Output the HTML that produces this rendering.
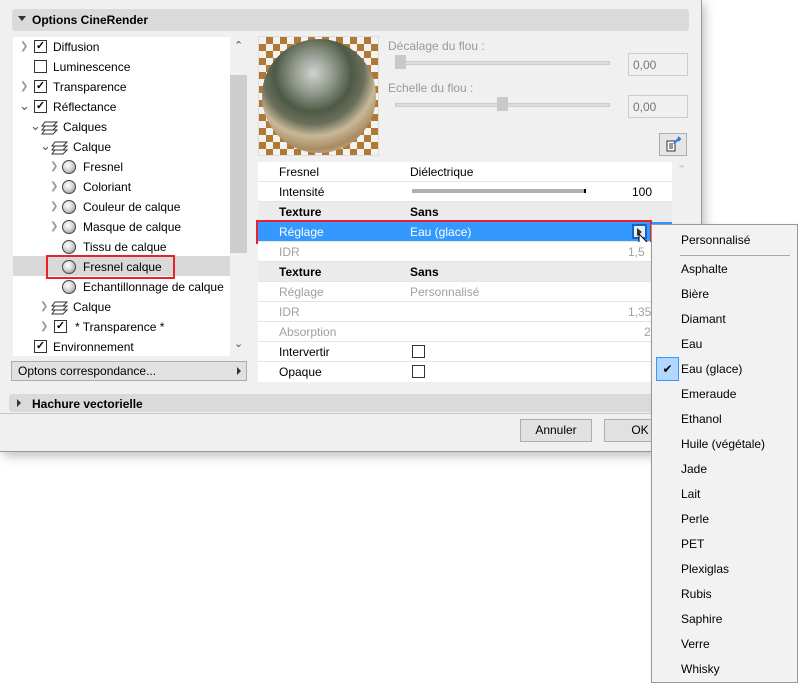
<!DOCTYPE html>
<html><head><meta charset="utf-8"><style>
*{box-sizing:border-box;margin:0;padding:0}
body{width:798px;height:683px;background:#fff;position:relative;overflow:hidden;font-family:"Liberation Sans",sans-serif;font-size:12px;color:#000}
.a{position:absolute}
#dlg{left:0;top:0;width:702px;height:452px;background:#f0f0f0;border-right:1px solid #8a9bb0;border-bottom:1px solid #8a9bb0;box-shadow:3px 4px 10px rgba(0,0,0,.25)}
.bar{background:#dadada;border-radius:3px}
.row{position:absolute;left:0;height:20px;line-height:20px;white-space:nowrap}
.cb{position:absolute;width:13px;height:13px;border:1px solid #333;background:#fff;font-size:11px;line-height:11px;text-align:center;font-weight:bold}
.chev{position:absolute;color:#999;font-size:10px}
.ball{position:absolute;width:14px;height:14px;border-radius:50%;border:1px solid #444;background:radial-gradient(circle at 40% 35%,#fff 0,#ddd 40%,#888 100%)}
.pr{position:absolute;left:258px;width:414px;height:20px;line-height:20px;border-bottom:1px solid #e4e4e4;background:#fff}
.pr .l{position:absolute;left:21px}.pr .v{position:absolute;left:152px}
.g{color:#a0a0a0}.b{font-weight:bold}
.mi{position:absolute;left:29px;height:25px;line-height:25px}
</style></head><body>
<div id="dlg" class="a">
 <div class="a bar" style="left:12px;top:9px;width:677px;height:22px"></div>
 <div class="a" style="left:18px;top:16px;border-left:4px solid transparent;border-right:4px solid transparent;border-top:5px solid #333"></div>
 <div class="a b" style="left:32px;top:13px">Options CineRender</div>

 <div class="a" style="left:13px;top:37px;width:234px;height:319px;background:#fff">
  <div class="a" style="left:217px;top:0;width:17px;height:319px;background:#f0f0f0"></div>
  <div class="a" style="left:217px;top:38px;width:17px;height:178px;background:#cdcdcd"></div>
  <div class="a" style="left:221px;top:2px;color:#555;font-size:11px">&#8963;</div>
  <div class="a" style="left:221px;top:300px;color:#555;font-size:11px">&#8964;</div>
  <div class="a" style="left:0;top:219px;width:217px;height:20px;background:#d9d9d9"></div>
 </div>
 <div class="a" style="left:13px;top:37px;width:217px;height:319px">
  <span class="chev" style="left:7px;top:4px">&#10095;</span><div class="cb" style="left:21px;top:3px">✓</div><div class="row" style="left:40px;top:0">Diffusion</div>
  <div class="cb" style="left:21px;top:23px"></div><div class="row" style="left:40px;top:20px">Luminescence</div>
  <span class="chev" style="left:7px;top:44px">&#10095;</span><div class="cb" style="left:21px;top:43px">✓</div><div class="row" style="left:40px;top:40px">Transparence</div>
  <span class="chev" style="left:6px;top:61px;color:#555;font-size:13px">&#8964;</span><div class="cb" style="left:21px;top:63px">✓</div><div class="row" style="left:40px;top:60px">Réflectance</div>
  <span class="chev" style="left:17px;top:81px;color:#555;font-size:13px">&#8964;</span><svg class="a" style="left:28px;top:83px" width="18" height="15"><path d="M4 2h12l-4 4H1zM4 6h12l-4 4H1zM4 10h12l-4 4H1z" fill="#fff" stroke="#333"/></svg><div class="row" style="left:50px;top:80px">Calques</div>
  <span class="chev" style="left:27px;top:101px;color:#555;font-size:13px">&#8964;</span><svg class="a" style="left:38px;top:103px" width="18" height="15"><path d="M4 2h12l-4 4H1zM4 6h12l-4 4H1zM4 10h12l-4 4H1z" fill="#fff" stroke="#333"/></svg><div class="row" style="left:60px;top:100px">Calque</div>
  <span class="chev" style="left:37px;top:124px">&#10095;</span><div class="ball" style="left:49px;top:123px"></div><div class="row" style="left:70px;top:120px">Fresnel</div>
  <span class="chev" style="left:37px;top:144px">&#10095;</span><div class="ball" style="left:49px;top:143px"></div><div class="row" style="left:70px;top:140px">Coloriant</div>
  <span class="chev" style="left:37px;top:164px">&#10095;</span><div class="ball" style="left:49px;top:163px"></div><div class="row" style="left:70px;top:160px">Couleur de calque</div>
  <span class="chev" style="left:37px;top:184px">&#10095;</span><div class="ball" style="left:49px;top:183px"></div><div class="row" style="left:70px;top:180px">Masque de calque</div>
  <div class="ball" style="left:49px;top:203px"></div><div class="row" style="left:70px;top:200px">Tissu de calque</div>
  <div class="a" style="left:33px;top:218px;width:129px;height:24px;border:2px solid #e8222a"></div>
  <div class="ball" style="left:49px;top:223px"></div><div class="row" style="left:70px;top:220px">Fresnel calque</div>
  <div class="ball" style="left:49px;top:243px"></div><div class="row" style="left:70px;top:240px">Echantillonnage de calque</div>
  <span class="chev" style="left:27px;top:264px">&#10095;</span><svg class="a" style="left:38px;top:263px" width="18" height="15"><path d="M4 2h12l-4 4H1zM4 6h12l-4 4H1zM4 10h12l-4 4H1z" fill="#fff" stroke="#333"/></svg><div class="row" style="left:60px;top:260px">Calque</div>
  <span class="chev" style="left:27px;top:284px">&#10095;</span><div class="cb" style="left:41px;top:283px">✓</div><div class="row" style="left:62px;top:280px">* Transparence *</div>
  <div class="cb" style="left:21px;top:303px">✓</div><div class="row" style="left:40px;top:300px">Environnement</div>
 </div>
 <div class="a" style="left:11px;top:361px;width:236px;height:20px;background:#e1e1e1;border:1px solid #adadad;line-height:18px;padding-left:6px">Optons correspondance...</div>
 <div class="a" style="left:237px;top:367px;border-top:4px solid transparent;border-bottom:4px solid transparent;border-left:4px solid #333"></div>

 <div class="a" style="left:258px;top:36px;width:121px;height:120px;border:1px solid #ddd;background:repeating-conic-gradient(#b07a35 0 25%,#f2f2f2 0 50%) 0 0/14px 14px"></div>
 <div class="a" style="left:262px;top:39px;width:114px;height:114px;border-radius:50%;background:radial-gradient(circle at 45% 30%,#d0d4d0 0,#8a9284 22%,#4e5a44 38%,#6a6e5a 50%,#c8b898 62%,#a88a60 75%,#d8d0c0 88%,#555 100%)"></div>

 <div class="a" style="left:388px;top:39px;color:#999">Décalage du flou :</div>
 <div class="a" style="left:395px;top:61px;width:215px;height:4px;background:#dcdcdc;border:1px solid #ccc"></div>
 <div class="a" style="left:395px;top:55px;width:11px;height:14px;background:#c9c9c9"></div>
 <div class="a" style="left:628px;top:53px;width:60px;height:23px;border:1px solid #ccc;background:#f0f0f0;color:#777;padding:4px 0 0 4px">0,00</div>
 <div class="a" style="left:388px;top:81px;color:#999">Echelle du flou :</div>
 <div class="a" style="left:395px;top:103px;width:215px;height:4px;background:#dcdcdc;border:1px solid #ccc"></div>
 <div class="a" style="left:497px;top:97px;width:11px;height:14px;background:#c9c9c9"></div>
 <div class="a" style="left:628px;top:95px;width:60px;height:23px;border:1px solid #ccc;background:#f0f0f0;color:#777;padding:4px 0 0 4px">0,00</div>
 <div class="a" style="left:659px;top:133px;width:28px;height:23px;border:1px solid #adadad;background:#e6e6e6"></div>
 <svg class="a" style="left:665px;top:136px" width="18" height="17"><path d="M2 5h8v10H2zM4 8h4M4 10h4M4 12h4" fill="#fff" stroke="#333"/><path d="M9 8q3-5 6-5M13 1l2 2-2 2" fill="none" stroke="#2a7be4" stroke-width="2"/></svg>

 <div class="a" style="left:258px;top:162px;width:432px;height:218px;background:#fff"></div>
 <div class="a" style="left:672px;top:162px;width:18px;height:218px;background:#f0f0f0"></div>
 <div class="a" style="left:677px;top:163px;color:#bbb;font-size:11px">&#8963;</div>
 <div class="pr" style="top:162px"><span class="l">Fresnel</span><span class="v">Diélectrique</span></div>
 <div class="pr" style="top:182px"><span class="l">Intensité</span><div class="a" style="left:154px;top:7px;width:174px;height:4px;background:#b0b0b0;border-right:2px solid #000"></div><span class="a" style="left:374px">100</span></div>
 <div class="pr b" style="top:202px;background:#ebebeb"><span class="l">Texture</span><span class="v">Sans</span></div>
 <div class="pr" style="top:222px;background:#3399ff;color:#fff"><span class="l">Réglage</span><span class="v">Eau (glace)</span></div>
 <div class="a" style="left:632px;top:224px;width:15px;height:15px;border:2px solid #1464c8;background:#eee"></div>
 <div class="a" style="left:637px;top:228px;border-top:4px solid transparent;border-bottom:4px solid transparent;border-left:5px solid #333"></div>
 <div class="a" style="left:256px;top:220px;width:396px;height:24px;border:2px solid #e8222a"></div>
 <svg class="a" style="left:638px;top:233px" width="12" height="18"><path d="M1 1v13l3-3 3 6 2-1-3-6h4z" fill="#fff" stroke="#000"/></svg>
 <div class="pr g" style="top:242px"><span class="l">IDR</span><span class="a" style="left:370px">1,5</span></div>
 <div class="pr b" style="top:262px;background:#ebebeb"><span class="l">Texture</span><span class="v">Sans</span></div>
 <div class="pr g" style="top:282px"><span class="l">Réglage</span><span class="v">Personnalisé</span></div>
 <div class="pr g" style="top:302px"><span class="l">IDR</span><span class="a" style="left:370px">1,35</span></div>
 <div class="pr g" style="top:322px"><span class="l">Absorption</span><span class="a" style="left:386px">2</span></div>
 <div class="pr" style="top:342px"><span class="l">Intervertir</span><div class="cb" style="left:154px;top:3px"></div></div>
 <div class="pr" style="top:362px;border:0"><span class="l">Opaque</span><div class="cb" style="left:154px;top:3px"></div></div>

 <div class="a bar" style="left:9px;top:394px;width:690px;height:18px"></div>
 <div class="a" style="left:17px;top:399px;border-top:4px solid transparent;border-bottom:4px solid transparent;border-left:4px solid #333"></div>
 <div class="a b" style="left:32px;top:397px">Hachure vectorielle</div>
 <div class="a" style="left:0;top:413px;width:702px;height:1px;background:#c8c8c8"></div>
 <div class="a" style="left:520px;top:419px;width:72px;height:23px;border:1px solid #adadad;background:#e1e1e1;text-align:center;line-height:21px">Annuler</div>
 <div class="a" style="left:604px;top:419px;width:72px;height:23px;border:1px solid #adadad;background:#e1e1e1;text-align:center;line-height:21px">OK</div>
</div>

<div class="a" style="left:651px;top:224px;width:147px;height:459px;background:#f2f2f2;border:1px solid #999;box-shadow:2px 2px 4px rgba(0,0,0,.2)">
 <div class="mi" style="top:3px">Personnalisé</div>
 <div class="a" style="left:28px;top:30px;width:110px;height:1px;background:#aaa"></div>
 <div class="mi" style="top:32px">Asphalte</div>
 <div class="mi" style="top:57px">Bière</div>
 <div class="mi" style="top:82px">Diamant</div>
 <div class="mi" style="top:107px">Eau</div>
 <div class="a" style="left:4px;top:132px;width:23px;height:24px;background:#b3d7ff;border:1px solid #3399ff;text-align:center;line-height:22px;font-size:12px">✔</div>
 <div class="mi" style="top:132px">Eau (glace)</div>
 <div class="mi" style="top:157px">Emeraude</div>
 <div class="mi" style="top:182px">Ethanol</div>
 <div class="mi" style="top:207px">Huile (végétale)</div>
 <div class="mi" style="top:232px">Jade</div>
 <div class="mi" style="top:257px">Lait</div>
 <div class="mi" style="top:282px">Perle</div>
 <div class="mi" style="top:307px">PET</div>
 <div class="mi" style="top:332px">Plexiglas</div>
 <div class="mi" style="top:357px">Rubis</div>
 <div class="mi" style="top:382px">Saphire</div>
 <div class="mi" style="top:407px">Verre</div>
 <div class="mi" style="top:432px">Whisky</div>
</div>
</body></html>
